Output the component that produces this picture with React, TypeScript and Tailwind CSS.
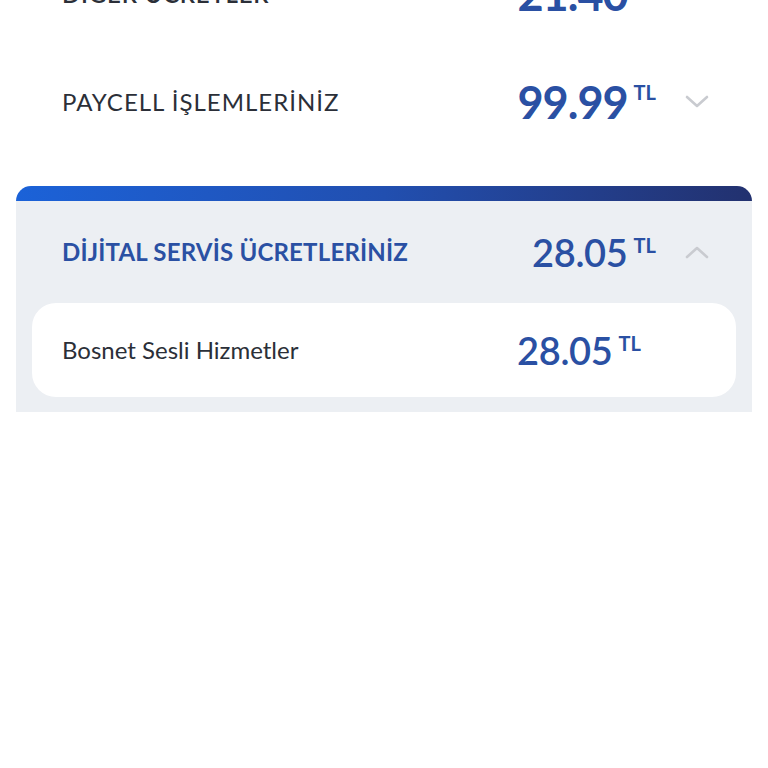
import { useState } from 'react'

const Chevron = ({ up }: { up?: boolean }) => (
  <svg width="26" height="14" viewBox="0 0 26 14" className={up ? 'rotate-180' : ''}>
    <path d="M3 2 L13 11 L23 2" fill="none" stroke="#c9cbd0" strokeWidth="2.6" strokeLinecap="round" strokeLinejoin="round" />
  </svg>
)

const Amount = ({ value, size }: { value: string; size: 'lg' | 'md' }) => (
  <div className="flex items-start text-[#2a50a3]">
    <span className={size === 'lg' ? 'text-[45px] leading-none font-bold tracking-[-1px]' : 'text-[38px] leading-none font-semibold tracking-[-0.3px]'}>
      {value}
    </span>
    <span className="ml-[6px] mt-[2px] text-[20px] leading-none font-bold">TL</span>
  </div>
)

const App = () => {
  const [open] = useState(true)

  return (
    <div className="w-[768px] h-[768px] bg-white overflow-hidden font-['Lato','Open_Sans',sans-serif]">
      <div className="-mt-[60px]">
        <div className="h-[108px] flex items-center pl-[62px] pr-[58px]">
          <span className="flex-1 text-[24px] font-semibold text-[#2b2f38] tracking-[0.8px]">DİĞER ÜCRETLER</span>
          <Amount value="21.40" size="lg" />
          <div className="w-[26px] ml-[28px]"><Chevron /></div>
        </div>
        <div className="h-[108px] flex items-center pl-[62px] pr-[58px]">
          <span className="flex-1 text-[24px] text-[#2b2f38] tracking-[1px]">PAYCELL İŞLEMLERİNİZ</span>
          <Amount value="99.99" size="lg" />
          <div className="w-[26px] ml-[28px]"><Chevron /></div>
        </div>
      </div>

      <div className="mx-[16px] mt-[30px]">
        <div className="h-[15px] rounded-t-[16px] bg-gradient-to-r from-[#1b62d8] via-[#214fb0] to-[#22316f]" />
        <div className="bg-[#eceff3] pb-[15px]">
          <div className="h-[102px] flex items-center pl-[46px] pr-[42px]">
            <span className="flex-1 text-[24px] font-bold text-[#2a50a3] tracking-[0.2px]">DİJİTAL SERVİS ÜCRETLERİNİZ</span>
            <Amount value="28.05" size="md" />
            <div className="w-[26px] ml-[28px]"><Chevron up={open} /></div>
          </div>
          <div className="mx-[16px] h-[94px] bg-white rounded-[24px] flex items-center pl-[30px] pr-[95px]">
            <span className="flex-1 text-[24px] text-[#2b2f38]">Bosnet Sesli Hizmetler</span>
            <Amount value="28.05" size="md" />
          </div>
        </div>
      </div>
    </div>
  )
}

export default App
